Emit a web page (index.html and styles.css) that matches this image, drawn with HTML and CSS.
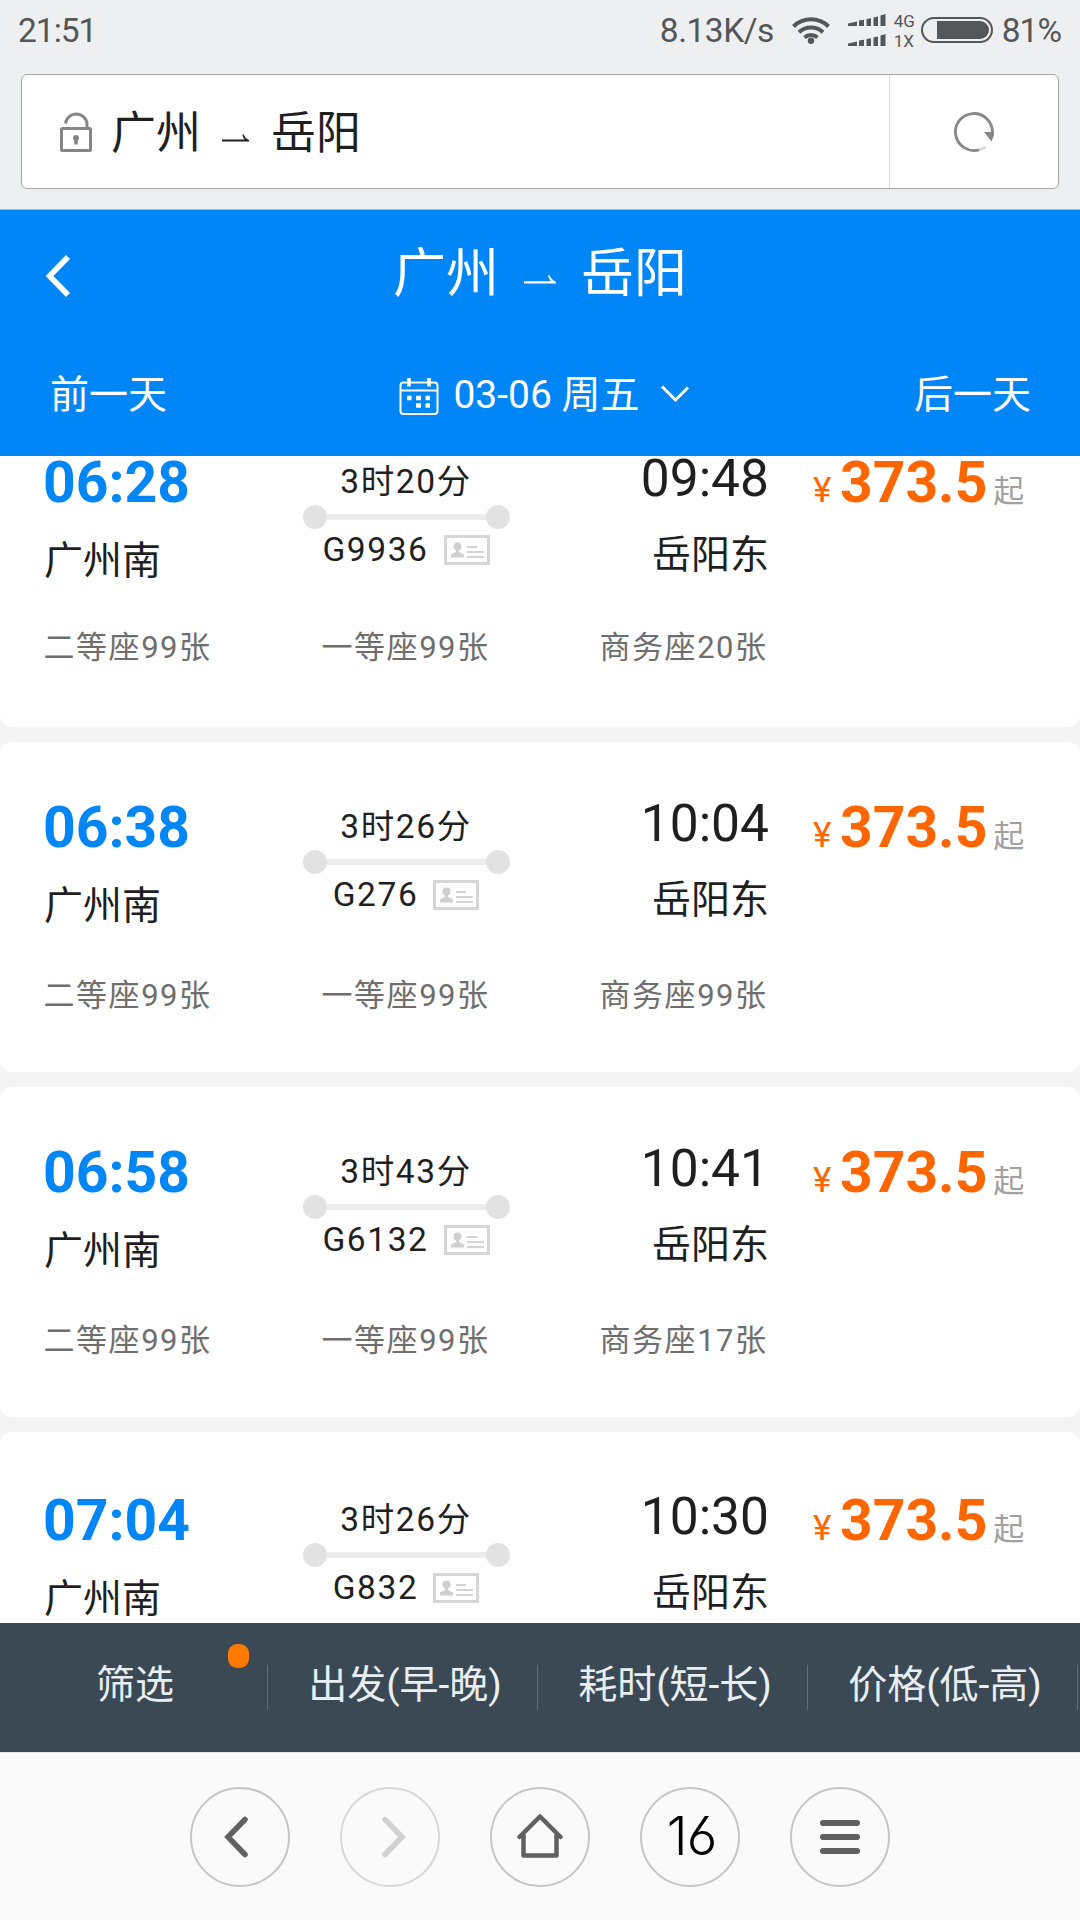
FILE: index.html
```html
<!DOCTYPE html>
<html lang="zh-CN">
<head>
    <meta charset="UTF-8">
    <meta name="viewport" content="width=device-width, initial-scale=1.0">
    <title>广州-岳阳</title>
    <link rel="stylesheet" href="styles.css">
</head>
<body>
    <svg class="sprite">
        <symbol id="idcard" viewBox="0 0 46 30">
            <rect x="1.5" y="1.5" width="43" height="27" fill="none" stroke="#d6d6d6" stroke-width="3"/>
            <circle cx="13.5" cy="11.5" r="4" fill="#cfcfcf"/>
            <path d="M12 14h3v3l5 2.500v3H7v-3l5-2.500z" fill="#cfcfcf"/>
            <path d="M23 12h10M23 17h17M23 22h17" stroke="#d3d3d3" stroke-width="2" fill="none"/>
        </symbol>
        <symbol id="harpoon" viewBox="0 0 32 9">
            <path d="M0 8.500h32V7C29 5.500 26.500 3 25.500 0L24 .5c.5 2.300 1.500 4 3 5.700H0z" fill="currentColor"/>
        </symbol>
        <symbol id="bars" viewBox="0 0 38 12">
            <path d="M0 9.500L9 7.500V12H0zM11 6.500l5-.8V12h-5zM18.500 5l4.500-.8V12h-4.500zM25.500 3.500l4.500-1V12h-4.500zM32.500 1.500L37.500 0v12h-5z" fill="#555658"/>
        </symbol>
    </svg>

    <!-- status bar -->
    <div class="status">
        <span class="clock">21:51</span>
        <span class="speed">8.13K/s</span>
        <svg class="wifi" viewBox="0 0 38 28" fill="none" stroke="#555658" stroke-width="4">
            <path d="M1.500 10.500a25 25 0 0 1 35 0M7 16.200a17.500 17.500 0 0 1 24 0M12.500 21.500a9.500 9.500 0 0 1 13 0"/>
            <circle cx="19" cy="24.800" r="3.200" fill="#555658" stroke="none"/>
        </svg>
        <div class="signal">
            <svg><use href="#bars"/></svg>
            <svg><use href="#bars"/></svg>
        </div>
        <div class="net"><span>4G</span><span>1X</span></div>
        <div class="battery"><div class="level"></div></div>
        <span class="percent">81%</span>
    </div>

    <!-- address bar -->
    <div class="address">
        <div class="page-name">
            <svg class="lock" viewBox="0 0 32 40" fill="none" stroke="#868686" stroke-width="3">
                <path d="M5.500 11.500A10.800 10.800 0 0 1 27 12v4"/>
                <rect x="1.500" y="16.500" width="29" height="22" rx="1"/>
                <circle cx="16" cy="26" r="3" fill="#868686" stroke="none"/>
                <path d="M16 26v6.500" stroke-width="3.500"/>
            </svg>
            <span>广州</span>
            <svg class="arrow"><use href="#harpoon"/></svg>
            <span>岳阳</span>
        </div>
        <div class="reload">
            <svg viewBox="0 0 40 40" fill="none" stroke="#868686" stroke-width="2.800">
                <path d="M38.400 21A18.500 18.500 0 1 0 25 37.800"/>
                <path d="M25 37.800A18 18 0 0 0 31.500 35" stroke="#d8d8d8"/>
                <path d="M30 20h10v3l-2.500 6.500z" fill="#868686" stroke="none"/>
            </svg>
        </div>
    </div>

    <!-- blue title -->
    <div class="header">
        <div class="title-row">
            <svg class="back" viewBox="0 0 25 42" fill="none" stroke="#fff" stroke-width="5.500">
                <path d="M23 2L4.500 21 23 40"/>
            </svg>
            <h1><span>广州</span><svg class="arrow"><use href="#harpoon"/></svg><span>岳阳</span></h1>
        </div>
        <div class="date-row">
            <span>前一天</span>
            <div class="date">
                <svg class="calendar" viewBox="0 0 40 38" fill="none" stroke="#fff" stroke-width="2">
                    <rect x="1.500" y="4.500" width="37" height="31.500" rx="3"/>
                    <path d="M1 12.500h38"/>
                    <path d="M10 0v8.500M30 0v8.500" stroke-width="3.500"/>
                    <path d="M8 20h4.500M17 20h5M26.500 20H31M17 27.500h5M26.500 27.500H31" stroke-width="4.500"/>
                </svg>
                <span>03-06 周五</span>
                <svg class="down" viewBox="0 0 28 18" fill="none" stroke="#fff" stroke-width="3">
                    <path d="M1 1.500l13.500 13.500L27 2.500"/>
                </svg>
            </div>
            <span>后一天</span>
        </div>
    </div>

    <!-- train list -->
    <div class="list">
        <div class="train">
            <div class="info">
                <div class="from"><div class="time">06:28</div><div class="station">广州南</div></div>
                <div class="route">
                    <div class="duration">3时20分</div>
                    <div class="line"><i></i><b></b><i></i></div>
                    <div class="number">G9936<svg class="idcard"><use href="#idcard"/></svg></div>
                </div>
                <div class="to"><div class="time">09:48</div><div class="station">岳阳东</div></div>
                <div class="price"><span class="yuan">¥</span><strong>373.5</strong><small>起</small></div>
            </div>
            <div class="seats"><span>二等座99张</span><span>一等座99张</span><span>商务座20张</span></div>
        </div>
        <div class="train">
            <div class="info">
                <div class="from"><div class="time">06:38</div><div class="station">广州南</div></div>
                <div class="route">
                    <div class="duration">3时26分</div>
                    <div class="line"><i></i><b></b><i></i></div>
                    <div class="number">G276<svg class="idcard"><use href="#idcard"/></svg></div>
                </div>
                <div class="to"><div class="time">10:04</div><div class="station">岳阳东</div></div>
                <div class="price"><span class="yuan">¥</span><strong>373.5</strong><small>起</small></div>
            </div>
            <div class="seats"><span>二等座99张</span><span>一等座99张</span><span>商务座99张</span></div>
        </div>
        <div class="train">
            <div class="info">
                <div class="from"><div class="time">06:58</div><div class="station">广州南</div></div>
                <div class="route">
                    <div class="duration">3时43分</div>
                    <div class="line"><i></i><b></b><i></i></div>
                    <div class="number">G6132<svg class="idcard"><use href="#idcard"/></svg></div>
                </div>
                <div class="to"><div class="time">10:41</div><div class="station">岳阳东</div></div>
                <div class="price"><span class="yuan">¥</span><strong>373.5</strong><small>起</small></div>
            </div>
            <div class="seats"><span>二等座99张</span><span>一等座99张</span><span>商务座17张</span></div>
        </div>
        <div class="train">
            <div class="info">
                <div class="from"><div class="time">07:04</div><div class="station">广州南</div></div>
                <div class="route">
                    <div class="duration">3时26分</div>
                    <div class="line"><i></i><b></b><i></i></div>
                    <div class="number">G832<svg class="idcard"><use href="#idcard"/></svg></div>
                </div>
                <div class="to"><div class="time">10:30</div><div class="station">岳阳东</div></div>
                <div class="price"><span class="yuan">¥</span><strong>373.5</strong><small>起</small></div>
            </div>
        </div>
    </div>

    <!-- sort and filter -->
    <div class="filters">
        <div class="filter">筛选<span class="dot"></span></div>
        <div class="filter">出发(早-晚)</div>
        <div class="filter">耗时(短-长)</div>
        <div class="filter">价格(低-高)</div>
    </div>

    <!-- browser buttons -->
    <div class="nav">
        <div class="btn">
            <svg width="24" height="42" viewBox="0 0 24 42" fill="none" stroke="#606060" stroke-width="5.500" stroke-linecap="round"><path d="M21 3.500L4 21l17 17.500"/></svg>
        </div>
        <div class="btn off">
            <svg width="24" height="42" viewBox="0 0 24 42" fill="none" stroke="#d2d2d2" stroke-width="5.500" stroke-linecap="round"><path d="M3 3.500L20 21 3 38.500"/></svg>
        </div>
        <div class="btn">
            <svg width="46" height="46" viewBox="0 0 46 46" fill="none" stroke="#606060" stroke-width="4.500" stroke-linecap="round" stroke-linejoin="round"><path d="M2.500 24L23 3.500 43.500 24"/><path d="M6.500 22v20.500h33V22"/></svg>
        </div>
        <div class="btn tabs">16</div>
        <div class="btn">
            <svg width="40" height="34" viewBox="0 0 40 34" stroke="#606060" stroke-width="6" stroke-linecap="round"><path d="M3 3h34M3 17h34M3 31h34"/></svg>
        </div>
    </div>
</body>
</html>
```
FILE: styles.css
```css
* {
  box-sizing: border-box;
}
body {
  margin: 0;
  width: 1080px;
  height: 1920px;
  overflow: hidden;
  display: flex;
  flex-direction: column;
  background: #eeeff1;
  font-family: Roboto, "Noto Sans CJK SC", sans-serif;
  color: #1f1f1f;
}
svg {
  display: block;
  flex: none;
}
.sprite {
  display: none;
}

/* status bar */
.status {
  display: flex;
  align-items: center;
  height: 74px;
  padding: 0 19px 14px 18px;
  font-size: 33.5px;
  line-height: 40px;
  color: #555658;
}
.status > span {
  padding-top: 2px;
}
.clock {
  flex: 1;
  letter-spacing: -1px;
}
.speed {
  letter-spacing: -0.5px;
}
.wifi {
  width: 38px;
  height: 28px;
  margin-left: 18px;
}
.signal {
  margin-left: 18px;
}
.signal svg {
  width: 38px;
  height: 12px;
}
.signal svg + svg {
  margin-top: 8px;
}
.net {
  display: flex;
  flex-direction: column;
  width: 27px;
  margin-left: 8px;
  padding-top: 1px;
  font-size: 17px;
  line-height: 20px;
}
.battery {
  width: 72px;
  height: 26px;
  padding: 2px 2px 2px 14px;
  border: 2px solid #555658;
  border-radius: 13px;
}
.level {
  height: 18px;
  border-radius: 0 9px 9px 0;
  background: #555658;
}
.percent {
  margin-left: 9px;
  letter-spacing: -1px;
}

/* address bar */
.address {
  display: flex;
  width: 1038px;
  height: 115px;
  margin: 0 21px 20px;
  border: 1px solid #a3a5a7;
  border-radius: 6px;
  background: #fff;
}
.page-name {
  display: flex;
  align-items: center;
  flex: 1;
  padding-left: 38px;
  font-size: 45px;
  line-height: 60px;
  border-right: 1px solid #dcdcdc;
}
.page-name span {
  padding-top: 5px;
}
.lock {
  width: 32px;
  height: 40px;
  margin-right: 19px;
}
.page-name .arrow {
  width: 27px;
  height: 8px;
  margin: 13px 22px 0 21px;
}
.reload {
  display: flex;
  align-items: center;
  justify-content: center;
  width: 168px;
}
.reload svg {
  width: 40px;
  height: 40px;
}

/* header */
.header {
  height: 247px;
  border-top: 1px solid #8cc0e8;
  background: #0086f6;
  color: #fff;
}
.title-row {
  display: grid;
  grid-template-columns: 70px 1fr 70px;
  align-items: center;
  height: 124px;
}
.back {
  width: 25px;
  height: 42px;
  margin: 8px 0 0 45px;
}
h1 {
  display: flex;
  align-items: center;
  justify-content: center;
  margin: 0;
  font-size: 53px;
  font-weight: 400;
  line-height: 70px;
}
h1 span {
  padding-top: 4px;
}
h1 .arrow {
  width: 32px;
  height: 9px;
  margin: 14px 25px 0;
}
.date-row {
  display: flex;
  align-items: center;
  justify-content: space-between;
  height: 122px;
  padding: 0 49px 0 50px;
  font-size: 39px;
  line-height: 50px;
}
.date {
  display: flex;
  align-items: center;
  padding-left: 7px;
}
.calendar {
  width: 40px;
  height: 38px;
  margin: 4px 14px 0 0;
}
.down {
  width: 28px;
  height: 18px;
  margin: 0 0 2px 21px;
}

/* train list */
.list {
  height: 1167px;
  overflow: hidden;
  background: #f4f4f4;
}
.train {
  height: 330px;
  margin-bottom: 15px;
  border-radius: 12px;
  background: #fff;
}
.train:first-child {
  margin-top: -59px;
}
.info {
  display: grid;
  grid-template-columns: 259px 207px 260px 1fr;
  height: 189px;
  padding: 51px 0 0 44px;
}
.train:last-child .info {
  padding-top: 54px;
}
.station {
  font-size: 39px;
  line-height: 50px;
}
.from {
  padding-top: 4px;
}
.from .time {
  margin: 0 0 23px -1px;
  font-size: 57px;
  font-weight: 700;
  line-height: 61px;
  color: #0086f6;
}
.to {
  padding-top: 1px;
  text-align: right;
}
.to .time {
  margin-bottom: 21px;
  padding-right: 1px;
  font-size: 51.5px;
  line-height: 60px;
}
.to .station {
  padding-right: 1px;
}
.route {
  padding-top: 13px;
  font-size: 33.5px;
  letter-spacing: 1.6px;
  text-align: center;
}
.duration {
  padding-right: 1px;
  line-height: 41px;
}
.line {
  display: flex;
  align-items: center;
  margin: 3px 0 1px;
}
.line i {
  width: 24px;
  height: 24px;
  border-radius: 50%;
  background: #e2e2e2;
}
.line b {
  flex: 1;
  height: 6px;
  background: #ededed;
}
.number {
  display: flex;
  align-items: center;
  justify-content: center;
  padding-right: 1px;
  line-height: 40px;
}
.idcard {
  width: 46px;
  height: 30px;
  margin-left: 15px;
}
.price {
  display: flex;
  align-items: baseline;
  padding: 4px 0 0 43px;
  color: #ff6600;
}
.yuan {
  width: 27px;
  font-size: 35px;
}
.price strong {
  font-size: 57px;
  line-height: 61px;
}
.price small {
  margin-left: 6px;
  font-size: 31px;
  color: #a0a0a0;
}
.seats {
  display: grid;
  grid-template-columns: 278px 278px 278px;
  margin: 43px 0 0 43.5px;
  font-size: 31px;
  line-height: 44px;
  letter-spacing: 1.55px;
  color: #6e6e6e;
}
.train:first-child .seats {
  margin-top: 40px;
}

/* sort and filter */
.filters {
  display: flex;
  height: 129px;
  background: #3b4955;
  color: #e8eef2;
}
.filter {
  position: relative;
  display: flex;
  align-items: center;
  justify-content: center;
  width: 270px;
  padding-bottom: 13px;
  font-size: 39px;
}
.filter::after {
  content: "";
  position: absolute;
  top: 42px;
  right: 2px;
  width: 1px;
  height: 45px;
  background: #5f6d79;
}
.dot {
  position: absolute;
  top: 21px;
  left: 228px;
  width: 21px;
  height: 24px;
  border-radius: 9px;
  background: #ff7900;
}

/* browser buttons */
.nav {
  display: flex;
  align-items: center;
  justify-content: center;
  gap: 50px;
  height: 168px;
  padding-top: 1px;
  border-top: 1px solid #e3e3e3;
  background: #fafafa;
}
.btn {
  display: flex;
  align-items: center;
  justify-content: center;
  width: 100px;
  height: 100px;
  border: 2px solid #c6c6c6;
  border-radius: 50%;
}
.btn:first-child svg {
  margin-right: 9px;
}
.btn.off {
  border-color: #d8d8d8;
}
.btn.off svg {
  margin-left: 8px;
}
.btn:nth-child(3) svg {
  margin-bottom: 3px;
}
.tabs {
  padding: 0 0 3px 3px;
  font-family: Inter, Roboto, sans-serif;
  font-size: 53px;
  font-weight: 350;
  letter-spacing: -1px;
  font-feature-settings: "ss01";
  color: #000;
}
```
